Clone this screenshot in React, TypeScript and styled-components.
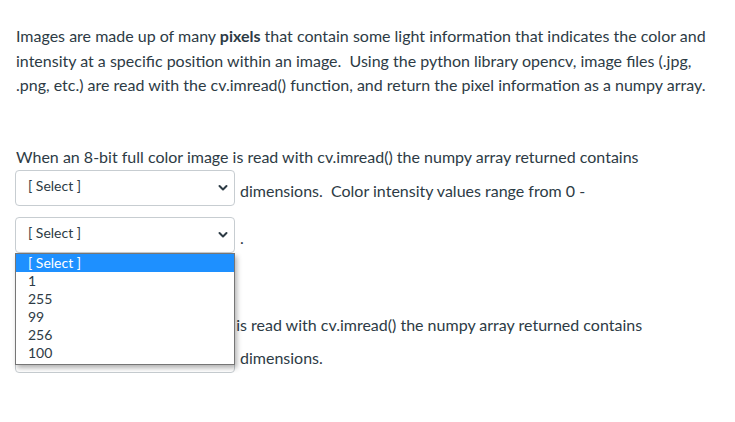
import styled, { createGlobalStyle } from 'styled-components'

const GlobalStyle = createGlobalStyle`
  html, body {
    margin: 0;
    padding: 0;
    background: #ffffff;
  }
  body {
    font-family: Lato, "Noto Sans", "Liberation Sans", sans-serif;
    color: #2d3b45;
  }
`

const Page = styled.div`
  padding: 24px 16px 0 16px;
  width: 735px;
  box-sizing: border-box;
`

const Paragraph = styled.p`
  margin: 0 0 47px 0;
  font-size: 16px;
  line-height: 24.5px;
`

const Question = styled.div<{ $gap?: number }>`
  font-size: 16px;
  line-height: 24px;
  margin-top: ${({ $gap }) => $gap ?? 0}px;
`

const Line = styled.div`
  margin: 0;
`

const Row = styled.div<{ $top?: number }>`
  display: flex;
  align-items: flex-end;
  margin-top: ${({ $top }) => $top ?? 0}px;
  margin-left: -1px;
`

const SelectWrap = styled.div`
  position: relative;
  width: 220px;
  height: 36px;
  flex: none;
`

const SelectBox = styled.div`
  box-sizing: border-box;
  width: 100%;
  height: 100%;
  border: 1px solid #c7cdd1;
  border-radius: 4px;
  background: #ffffff;
  display: flex;
  align-items: center;
  justify-content: space-between;
  padding: 0 6px 0 12px;
  font-size: 14px;
  color: #2d3b45;
`

const SelectText = styled.span`
  margin-top: -4px;
`

const Chevron = styled.svg`
  width: 10px;
  height: 10px;
  margin-top: 1px;
`

const Trailing = styled.span`
  margin-left: 5px;
  padding-bottom: 3px;
  white-space: nowrap;
`

const List = styled.ul`
  position: absolute;
  top: 36px;
  left: 0;
  z-index: 10;
  box-sizing: border-box;
  width: 220px;
  margin: 0;
  padding: 0 0 2px 0;
  list-style: none;
  background: #ffffff;
  border: 1px solid #767676;
  box-shadow: 2px 3px 5px rgba(0, 0, 0, 0.3);
  font-size: 14px;
  line-height: 18px;
`

const Option = styled.li<{ $active?: boolean }>`
  padding: 0 12px;
  height: 18px;
  background: ${({ $active }) => ($active ? '#1e90ff' : 'transparent')};
  color: ${({ $active }) => ($active ? '#ffffff' : '#2d3b45')};
`

const options = ['[ Select ]', '1', '255', '99', '256', '100']

const Select = ({ open }: { open?: boolean }) => (
  <SelectWrap>
    <SelectBox>
      <SelectText>[ Select ]</SelectText>
      <Chevron viewBox="0 0 10 10">
        <path d="M1.5 3 L5 6.5 L8.5 3" fill="none" stroke="#2d3b45" strokeWidth="2" strokeLinecap="round" strokeLinejoin="round" />
      </Chevron>
    </SelectBox>
    {open && (
      <List>
        {options.map((o, i) => (
          <Option key={o} $active={i === 0}>
            {o}
          </Option>
        ))}
      </List>
    )}
  </SelectWrap>
)

export default function App() {
  return (
    <>
      <GlobalStyle />
      <Page>
        <Paragraph>
          Images are made up of many <strong>pixels</strong> that contain some light information that indicates the
          color and intensity at a specific position within an image.&nbsp; Using the python library opencv, image
          files (.jpg, .png, etc.) are read with the cv.imread() function, and return the pixel information as a numpy
          array.
        </Paragraph>
        <Question>
          <Line>When an 8-bit full color image is read with cv.imread() the numpy array returned contains</Line>
          <Row $top={1}>
            <Select />
            <Trailing>dimensions.&nbsp; Color intensity values range from 0 -</Trailing>
          </Row>
          <Row $top={11}>
            <Select open />
            <Trailing>.</Trailing>
          </Row>
        </Question>
        <Question $gap={60}>
          <Line>When an 8-bit grayscale image is read with cv.imread() the numpy array returned contains</Line>
          <Row>
            <Select />
            <Trailing>dimensions.</Trailing>
          </Row>
        </Question>
      </Page>
    </>
  )
}
